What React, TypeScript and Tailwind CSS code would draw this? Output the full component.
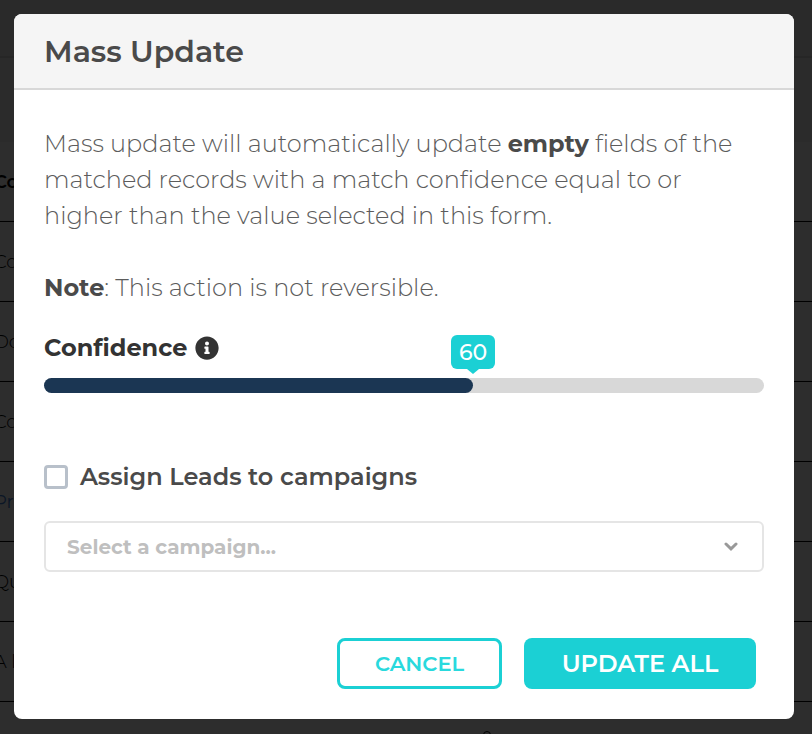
import { useState } from "react";
import { FaInfoCircle } from "react-icons/fa";

const MIN = 1;
const MAX = 100;

const rows = ["Co", "Do", "Co", "Pr", "Qu", "A l"];

function BackgroundTable() {
  return (
    <div aria-hidden="true" className="absolute inset-0 overflow-hidden bg-[#2d2d2d] text-black">
      <div className="h-[58px] border-b-2 border-[#262626] bg-[#2a2a2a]" />
      <div className="h-[84px] bg-[#2b2b2b]" />
      <div className="flex h-20 items-center border-b border-black text-lg font-semibold">
        <span className="-ml-1.5">Co</span>
      </div>
      {rows.map((text, i) => (
        <div
          key={i}
          className={
            "flex h-20 items-center border-b border-black text-lg " +
            (text === "Pr" ? "text-[#0b1626]" : "font-light")
          }
        >
          <span className="-ml-1.5 whitespace-nowrap">{text}</span>
        </div>
      ))}
      <div className="flex justify-center pt-[29px] pl-[162px]">
        <span className="size-2 rounded-full border border-black" />
      </div>
    </div>
  );
}

function ConfidenceSlider() {
  const [value, setValue] = useState(60);
  const percent = ((value - MIN) / (MAX - MIN)) * 100;

  return (
    <div>
      <div className="flex h-9 items-center gap-2 text-[#333]">
        <label htmlFor="confidence" className="text-2xl font-bold">
          Confidence
        </label>
        <FaInfoCircle className="size-6" />
      </div>
      <div className="relative mt-3 h-[15px] rounded-full bg-[#d8d8d8]">
        <div className="h-full rounded-full bg-[#1b3653]" style={{ width: `${percent}%` }} />
        <output
          htmlFor="confidence"
          className="absolute bottom-6 flex h-[34px] w-11 -translate-x-1/2 items-center justify-center rounded-md bg-[#1bd0d4] text-[22px] font-medium text-white"
          style={{ left: `${percent}%` }}
        >
          {value}
          <span className="absolute top-full border-x-[6px] border-t-[5px] border-x-transparent border-t-[#1bd0d4]" />
        </output>
        <input
          id="confidence"
          type="range"
          min={MIN}
          max={MAX}
          value={value}
          onChange={(e) => setValue(Number(e.target.value))}
          className="absolute inset-0 h-full w-full cursor-pointer opacity-0"
        />
      </div>
    </div>
  );
}

export default function App() {
  return (
    <div className="relative min-h-screen overflow-hidden py-3.5 pr-[18px] pl-3.5 font-['Montserrat','Inter',sans-serif] [font-variant-ligatures:none]">
      <BackgroundTable />
      <div
        role="dialog"
        aria-labelledby="dialog-title"
        className="relative overflow-hidden rounded-lg bg-white text-[#4a4a4a]"
      >
        <header className="flex h-[76px] items-center border-b-2 border-[#d8d8d8] bg-[#f5f5f5] px-[30px] pt-0.5">
          <h1 id="dialog-title" className="text-3xl font-semibold">
            Mass Update
          </h1>
        </header>

        <form className="px-[30px] pt-9 pb-[30px]" onSubmit={(e) => e.preventDefault()}>
          <p className="text-2xl leading-9 font-light text-[#5c5c5c]">
            Mass update will automatically update <strong className="font-bold text-[#4a4a4a]">empty</strong>{" "}
            fields of the matched records with a match confidence equal to or higher than the value selected in
            this form.
          </p>
          <p className="mt-9 mb-6 text-2xl leading-9 font-light text-[#5c5c5c]">
            <strong className="font-bold text-[#4a4a4a]">Note</strong>: This action is not reversible.
          </p>

          <ConfidenceSlider />

          <div className="mt-[66px] flex h-9 items-center gap-3">
            <input
              id="assign"
              type="checkbox"
              className="size-6 appearance-none rounded-sm border-3 border-[#b8c0ca] bg-white checked:bg-[#1bd0d4]"
            />
            <label htmlFor="assign" className="text-2xl font-semibold">
              Assign Leads to campaigns
            </label>
          </div>

          <div className="relative mt-[26px]">
            <select
              aria-label="Campaign"
              className="h-[51px] w-full appearance-none rounded-md border-2 border-[#e5e5e5] bg-white px-[21px] text-xl font-bold text-[#bfbfbf]"
            >
              <option>Select a campaign...</option>
            </select>
            <svg
              viewBox="0 0 14 10"
              className="pointer-events-none absolute top-5 right-[26px] h-2.5 w-3.5"
              fill="none"
              stroke="#999"
              strokeWidth="3"
              strokeLinecap="round"
            >
              <path d="M2 3 L7 7.8 L12 3" />
            </svg>
          </div>

          <div className="mt-[66px] flex justify-end gap-[22px] pr-2">
            <button
              type="button"
              className="h-[51px] w-[165px] rounded-lg border-3 border-[#1bd0d4] text-[21px] font-semibold text-[#29d9dd]"
            >
              CANCEL
            </button>
            <button type="submit" className="h-[51px] w-[232px] rounded-lg bg-[#1bd0d4] text-2xl font-semibold text-white">
              UPDATE ALL
            </button>
          </div>
        </form>
      </div>
    </div>
  );
}
